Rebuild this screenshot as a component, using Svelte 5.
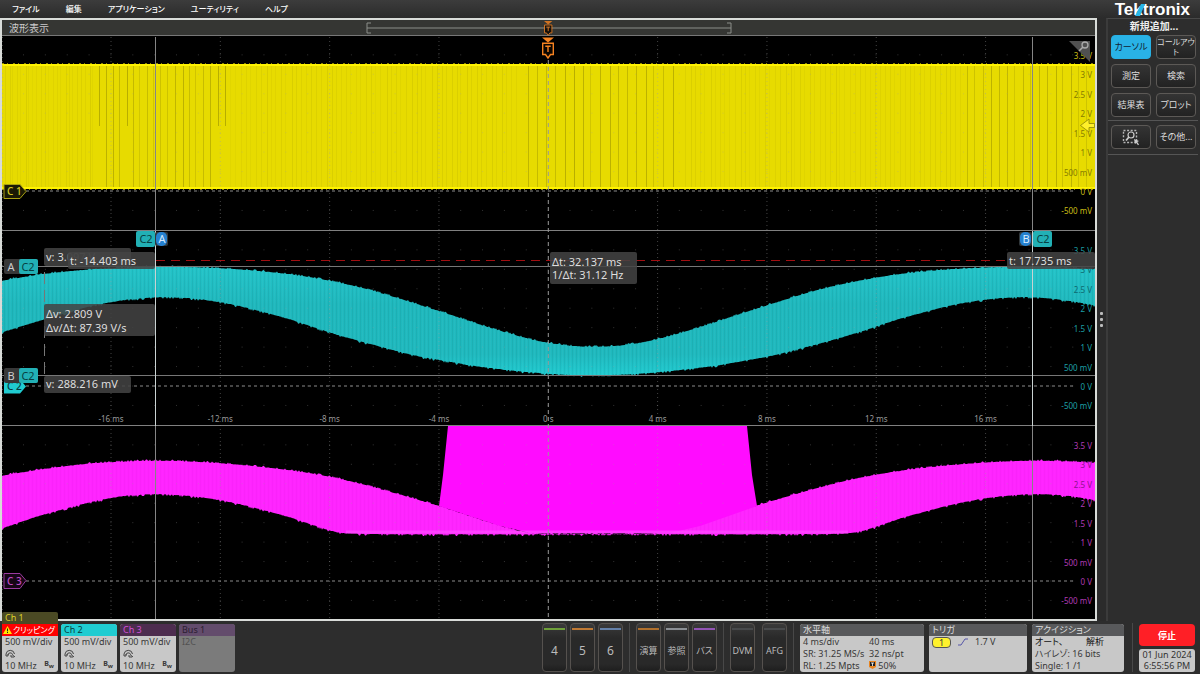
<script lang="ts">
	type Point = [number, number];

	const menus = ['ファイル', '編集', 'アプリケーション', 'ユーティリティ', 'ヘルプ'];
	const volts = ['3.5 V', '3 V', '2.5 V', '2 V', '1.5 V', '1 V', '500 mV', '0 V', '-500 mV'];
	const times = [-16, -12, -8, -4, 0, 4, 8, 12, 16];

	// plot coordinates: each slice holds 10 vertical steps of 500 mV
	const left = 2;
	const right = 1095;
	const zeroX = 548.3;
	const msWidth = 27.33;
	const step = 19.45;
	const slices = [
		{ id: 1, top: 37, zero: 191, color: '#c9bd14', over: '#857c00', covered: [1, 2, 3, 4, 5, 6] },
		{ id: 2, top: 231, zero: 386, color: '#1c9fa5', over: '#0d6a70', covered: [1, 2] },
		{ id: 3, top: 426, zero: 581, color: '#b03ab4', over: '#8d128f', covered: [1, 2] }
	];

	const cyanTop: Point[] = [[-60, 291], [2, 281], [45, 274], [100, 269], [155, 267], [220, 268.5], [286, 274], [329, 281], [373, 291], [438, 311], [500, 331], [548, 343], [594, 347]];
	const cyanBottom: Point[] = [[-60, 350], [2, 332], [45, 319], [100, 304], [160, 297], [220, 302], [286, 318], [329, 332], [373, 344.5], [416, 355.5], [438, 359.5], [480, 366.5], [548, 373.5], [594, 375]];
	const pinkTop: Point[] = [[-60, 488], [2, 476], [60, 467], [100, 463], [160, 461], [220, 463.5], [286, 470], [329, 477], [370, 486.5], [438, 506], [500, 526], [530, 533], [597, 534]];
	const pinkBottom: Point[] = [[-60, 546], [2, 528], [45, 514], [110, 498], [160, 494], [220, 500], [286, 516], [329, 530], [346, 533], [400, 534], [597, 534]];

	function noise(n: number) {
		const v = Math.sin(n * 12.9898) * 43758.5453;
		return v - Math.floor(v);
	}

	function mirror(points: Point[], axis: number): Point[] {
		const back = points.slice(0, -1).reverse();
		return [...points, ...back.map(([x, y]) => [2 * axis - x, y] as Point)];
	}

	// Catmull-Rom through the key points
	function curve(points: Point[], x: number) {
		let i = points.findIndex((p) => p[0] > x) - 1;
		if (i < 0) i = 0;
		const p0 = points[Math.max(i - 1, 0)];
		const p1 = points[i];
		const p2 = points[i + 1];
		const p3 = points[Math.min(i + 2, points.length - 1)];
		const h = p2[0] - p1[0];
		const t = (x - p1[0]) / h;
		const m1 = ((p2[1] - p0[1]) / (p2[0] - p0[0])) * h;
		const m2 = ((p3[1] - p1[1]) / (p3[0] - p1[0])) * h;
		const t2 = t * t;
		const t3 = t2 * t;
		return (2 * t3 - 3 * t2 + 1) * p1[1] + (t3 - 2 * t2 + t) * m1 + (3 * t2 - 2 * t3) * p2[1] + (t3 - t2) * m2;
	}

	function band(top: Point[], bottom: Point[], axis: number) {
		const a = mirror(top, axis);
		const b = mirror(bottom, axis);
		const up: string[] = [];
		const down: string[] = [];
		for (let x = left; x <= right; x += 1) {
			const n = noise(x);
			const m = noise(x + 4000);
			up.push(`${x} ${(curve(a, x) - (n > 0.8 ? 1.5 : n * 0.6)).toFixed(1)}`);
			down.unshift(`${x} ${(curve(b, x) + (m > 0.85 ? 1.8 : m * 0.6)).toFixed(1)}`);
		}
		return `M${up.join('L')}L${down.join('L')}Z`;
	}

	const cyanBand = band(cyanTop, cyanBottom, 594);
	const pinkBand = band(pinkTop, pinkBottom, 597);

	// aliasing gaps between the packed clock pulses
	const gaps: { x: number; length: number; opacity: number }[] = [];
	for (const [from, to, pitch] of [[4, 96, 4], [97, 225, 7], [230, 520, 5], [527, 680, 9], [684, 960, 5], [966, 1090, 8]]) {
		for (let x = from; x < to; x += pitch) {
			const n = noise(x + 31);
			const strong = pitch > 6;
			gaps.push({ x: Math.round(x + n * 2), length: strong && n > 0.93 ? 60 : 121, opacity: strong ? 0.12 + n * 0.16 : 0.03 + n * 0.05 });
		}
	}

	const channels = [
		{ name: 'Ch 1', kind: 'one' },
		{ name: 'Ch 2', kind: 'two' },
		{ name: 'Ch 3', kind: 'three' }
	];
	const adders = [
		[
			{ label: '4', color: '#6fa03a' },
			{ label: '5', color: '#c07a34' },
			{ label: '6', color: '#6480a8' }
		],
		[
			{ label: '演算', color: '#b0702c' },
			{ label: '参照', color: '#8b8f94' },
			{ label: 'バス', color: '#9254b4' }
		],
		[
			{ label: 'DVM', color: '#484a4c' },
			{ label: 'AFG', color: '#484a4c' }
		]
	];

	let active = 'カーソル';
	const tools = ['カーソル', 'コールアウ\nト', '測定', '検索', '結果表', 'プロット'];
</script>

{#snippet trigger()}
	<path d="M0 0H12L6 5Z" fill="#f58220" />
	<path d="M.7 5.7H11.3V17H8.5L6 20.5L3.5 17H.7Z" fill="#0a0500" stroke="#f58220" stroke-width="1.4" />
	<path d="M3.3 8.7H8.7M6 8.7V14.5" stroke="#f58220" stroke-width="1.4" fill="none" />
{/snippet}

<div class="screen">
	<header>
		<nav>
			{#each menus as menu}
				<button class="menu">{menu}</button>
			{/each}
		</nav>
		<div class="logo">
			Tektronix
			<svg class="slash" viewBox="0 0 10 12" width="10" height="12" aria-hidden="true">
				<path d="M6 0H10L5 12H0Z" fill="#27b7e8" />
			</svg>
		</div>
	</header>

	<main>
		<section class="scope">
			<div class="title">
				<span>波形表示</span>
				<svg viewBox="0 0 366 16" width="366" height="16" aria-hidden="true">
					<path d="M5 3H1V13H5M361 3H365V13H361M1 8H365" fill="none" stroke="#8c8e8a" />
					<g transform="translate(178 1) scale(.7)" opacity=".8">{@render trigger()}</g>
				</svg>
			</div>

			<svg class="plot" viewBox="2 36 1093 583" role="img" aria-label="波形表示">
				<defs>
					<pattern id="stripes" width="4" height="8" patternUnits="userSpaceOnUse">
						<rect width="1" height="8" fill="#000" opacity=".05" />
						<rect x="2" width="1" height="8" fill="#fff" opacity=".03" />
					</pattern>
					<linearGradient id="cyan" x1="0" x2="0" y1="0" y2="1">
						<stop offset="0" stop-color="#23c4c9" />
						<stop offset=".35" stop-color="#1fb8bd" />
						<stop offset=".8" stop-color="#1fb9be" />
						<stop offset="1" stop-color="#20ccd1" />
					</linearGradient>
				</defs>
				<rect x={left} y="36" width="1093" height="584" fill="#000" />

				<rect x={left} y="64" width="1093" height="125" fill="#e7db00" />
				{#each gaps as gap}
					<rect x={gap.x} y="66" width="1" height={gap.length} fill="#3a3600" opacity={gap.opacity} />
				{/each}
				<path d="M2 65H1095M2 188H1095" stroke="#fff300" stroke-width="2" />
				<path d="M2 63.5H1095M2 189.5H1095" stroke="#8f8700" stroke-dasharray="2 3 1 5" />

				<path d={cyanBand} fill="url(#cyan)" />
				<path d={cyanBand} fill="url(#stripes)" />
				<path d={pinkBand} fill="#ff24ff" />
				<path d={pinkBand} fill="url(#stripes)" opacity=".4" />
				<path d="M439 506L443 475L448 426H747L752 475L757 506L700 526L670 533H530L500 526Z" fill="#ff0cff" />
				<path d="M346 532H848" stroke="#ff50ff" stroke-width="3" opacity=".7" />

				{#each slices as slice}
					{#each volts as _, i}
						<line class="dots" x1="23" x2="1076" y1={slice.zero - (7 - i) * step} y2={slice.zero - (7 - i) * step} />
					{/each}
					<line class="zero" x1="26" x2="1076" y1={slice.zero} y2={slice.zero} />
					{#if slice.id > 1}
						<line class="edge" x1={left} x2={right} y1={slice.top - 0.5} y2={slice.top - 0.5} />
					{/if}
				{/each}
				{#each times as time}
					<line
						class={time === 0 ? 'center' : 'major'}
						x1={zeroX + time * msWidth}
						x2={zeroX + time * msWidth}
						y1={time === 0 ? 60 : 37}
						y2="619"
					/>
					<text class="axis time" x={zeroX + time * msWidth} y="422">{time === 0 ? '0 s' : `${time} ms`}</text>
				{/each}
				<path class="major" d="M2.5 37V619" />

				{#each slices as slice}
					{#each volts as volt, i}
						<text class="axis" x="1092" y={slice.zero - (7 - i) * step + 4} fill={slice.covered.includes(i) ? slice.over : slice.color}>
							{volt}
						</text>
					{/each}
				{/each}

				<path d="M2 266.5H1095M2 375.5H1095" stroke="#777" />
				<path d="M155.5 37V619M1032.5 37V619" stroke="#858585" stroke-width="1" />
				<path d="M155.5 231V426M1032.5 231V426" stroke="#c9d2d2" stroke-width="1" />
				<path d="M44.5 272V375" stroke="#777" stroke-dasharray="12 6" />
				<path d="M156 260.5H1007" stroke="#a10f12" stroke-dasharray="9 6" />

				<g class="tag">
					<path d="M4 184.5H20L26 191.5L20 198.5H4Z" fill="#1b1a05" stroke="#aaa112" />
					<text x="7" y="195" fill="#d6ca20">C 1</text>
					<path d="M4 379.5H20L26 386.5L20 393.5H4Z" fill="#20ccd1" />
					<text x="7" y="390" fill="#063c40">C 2</text>
					<path d="M4 573.5H20L26 580.5L20 588.5H4Z" fill="#160616" stroke="#9a3aa0" />
					<text x="7" y="585" fill="#c14cc8">C 3</text>
				</g>

				<g class="readout">
					<rect x="44" y="248" width="87" height="18" rx="2" />
					<text x="46" y="261">v: 3.<tspan opacity=".3">097 V</tspan></text>
					<rect x="68" y="252" width="87" height="17" rx="2" />
					<text x="70" y="265">t: -14.403 ms</text>
					<rect x="44" y="304" width="111" height="32" rx="2" />
					<text x="46" y="318">Δv: 2.809 V</text>
					<text x="46" y="332">Δv/Δt: 87.39 V/s</text>
					<rect x="44" y="376" width="87" height="17" rx="2" />
					<text x="46" y="388">v: 288.216 mV</text>
					<rect x="550" y="252" width="87" height="32" rx="2" />
					<text x="552" y="266">Δt: 32.137 ms</text>
					<text x="552" y="279">1/Δt: 31.12 Hz</text>
					<rect x="1007" y="252" width="88" height="17" rx="2" />
					<text x="1009" y="265">t: 17.735 ms</text>
				</g>

				<g class="handle">
					{#each [{ name: 'A', y: 259 }, { name: 'B', y: 368 }] as cursor}
						<rect x="4" y={cursor.y} width="34" height="15" rx="2" fill="#383838" />
						<rect x="19" y={cursor.y} width="19" height="15" rx="2" fill="#22b0b5" />
						<text x="11" y={cursor.y + 12} fill="#ccc">{cursor.name}</text>
						<text x="28" y={cursor.y + 12} fill="#083f42">C2</text>
					{/each}
					{#each [{ name: 'A', box: 136, pill: 156 }, { name: 'B', box: 1033, pill: 1020 }] as cursor}
						<rect x={cursor.pill - 1} y="232" width="13" height="14" rx="2" fill="#30373b" />
						<rect x={cursor.pill} y="232" width="11" height="14" rx="5" fill="#2581d0" />
						<rect x={cursor.box} y="231" width="19" height="16" rx="2" fill="#22b0b5" />
						<text x={cursor.box + 10} y="243" fill="#083f42">C2</text>
						<text x={cursor.pill + 6} y="243" fill="#d8ecff">{cursor.name}</text>
					{/each}
				</g>

				<g transform="translate(542 37.5)">{@render trigger()}</g>
				<path d="M1069 41H1090V62Z" fill="#505050" />
				<circle cx="1085" cy="45" r="3" fill="none" stroke="#aaa" stroke-width="1.3" />
				<path d="M1083 47L1079 51" stroke="#aaa" stroke-width="1.6" />
				<path d="M1080.5 125.5L1089 119V123.5H1094.5V127.5H1089V132Z" fill="#fff02a" stroke="#8c8408" stroke-width=".8" />
			</svg>
		</section>

		<button class="splitter" aria-label="サイズ変更"><i></i><i></i><i></i></button>

		<aside>
			<h2>新規追加...</h2>
			<div class="tools">
				{#each tools as tool}
					<button class:active={active === tool} class:long={tool.length > 5} on:click={() => (active = tool)}>{tool}</button>
				{/each}
			</div>
			<div class="tools more">
				<button aria-label="ズーム">
					<svg viewBox="0 0 18 18" width="18" height="18" aria-hidden="true">
						<rect x="1.5" y="2.5" width="13" height="12" fill="none" stroke="#b5b5b5" stroke-width="1.4" stroke-dasharray="2 1.6" />
						<circle cx="9" cy="7" r="3" fill="#2b2b2b" stroke="#ccc" stroke-width="1.2" />
						<path d="M7 9L4 12.5" stroke="#ccc" stroke-width="1.8" />
						<path d="M12 11L17 13L15.3 14L17 16.5L16 17.3L14.2 14.8L13 16Z" fill="#ccc" />
					</svg>
				</button>
				<button>その他...</button>
			</div>
		</aside>
	</main>

	<footer>
		<div class="channels">
			{#each channels as channel}
				<button class="badge {channel.kind}">
					{#if channel.kind === 'one'}
						<span class="tab">{channel.name}</span>
						<span class="head">
							<svg viewBox="0 0 9 8" width="9" height="8" aria-hidden="true">
								<path d="M4.5 0L9 8H0Z" fill="#ffe600" />
								<path d="M4.5 2.5V5.3M4.5 6V7" stroke="#222" />
							</svg>クリッピング
						</span>
					{:else}
						<span class="head">{channel.name}</span>
					{/if}
					<span class="line">500 mV/div</span>
					<svg class="probe" viewBox="0 0 11 10" width="11" height="10" aria-hidden="true">
						<path d="M1 6A4.3 4.3 0 0 1 9.5 6M3 7A2.3 2.3 0 0 1 7.5 6.5M1 6V8H3V6M7 6.5L10 9M6 7V9H9" fill="none" stroke="#444" />
					</svg>
					<span class="line split">10 MHz <b>B<sub>w</sub></b></span>
				</button>
			{/each}
			<button class="badge bus">
				<span class="head">Bus 1</span>
				<span class="line">I2C</span>
			</button>
		</div>

		{#each adders as group}
			<div class="adders">
				{#each group as adder}
					<button style="--stripe: {adder.color}">{adder.label}</button>
				{/each}
			</div>
		{/each}

		<div class="settings">
			<button class="badge horizontal">
				<span class="head">水平軸</span>
				<span class="pairs">
					<span>4 ms/div</span><span>40 ms</span>
					<span>SR: 31.25 MS/s</span><span>32 ns/pt</span>
					<span>RL: 1.25 Mpts</span>
					<span>
						<svg viewBox="0 0 7 8" width="7" height="8" aria-hidden="true">
							<path d="M0 0H7V6L3.5 8L0 6Z" fill="#e88420" />
							<path d="M1 1H6V5H1Z" fill="#222" />
							<path d="M2 2H5M3.5 2V5" stroke="#fff" stroke-width=".8" />
						</svg>
						50%
					</span>
				</span>
			</button>
			<button class="badge trig">
				<span class="head">トリガ</span>
				<span class="source">
					<span class="pill">1</span>
					<svg viewBox="0 0 10 8" width="10" height="8" aria-hidden="true">
						<path d="M0 7H3L7 1H10" fill="none" stroke="#5656a8" />
					</svg>
					1.7 V
				</span>
			</button>
			<button class="badge acq">
				<span class="head">アクイジション</span>
				<span class="line auto"><span>オート、</span><span>解析</span></span>
				<span class="line">ハイレゾ: 16 bits</span>
				<span class="line">Single: 1 /1</span>
			</button>
		</div>

		<div class="status">
			<button class="stop">停止</button>
			<time datetime="2024-06-01T18:55:56">01 Jun 2024<br />6:55:56 PM</time>
		</div>
	</footer>
</div>

<style>
	:global(body) {
		background: #2d2d2d;
	}

	.screen {
		display: flex;
		flex-direction: column;
		min-height: 100vh;
		background: #2d2d2d;
		color: #d8d8d8;
		font-family: 'Noto Sans', 'Noto Sans CJK JP', sans-serif;
		font-size: 9px;
		font-feature-settings: 'palt';
	}

	button {
		margin: 0;
		padding: 0;
		border: 0;
		background: none;
		color: inherit;
		font: inherit;
		font-feature-settings: inherit;
	}

	header {
		display: flex;
		justify-content: space-between;
		height: 18px;
		padding: 0 10px 0 12px;
		background: linear-gradient(#3c3c3c, #2b2b2b);
	}

	nav {
		display: flex;
		gap: 26px;
	}

	.menu {
		color: #fff;
		font-size: 8px;
		font-weight: 500;
		line-height: 18px;
	}

	.logo {
		position: relative;
		color: #fff;
		font: bold 17px/20px 'Liberation Sans', sans-serif;
	}

	.slash {
		position: absolute;
		left: 20px;
		top: 4px;
	}

	main {
		display: flex;
	}

	.scope {
		flex: 1;
		min-width: 0;
		border: 2px solid #d9dcd9;
		background: #000;
	}

	.title {
		display: grid;
		grid-template-columns: 1fr auto 1fr;
		height: 16px;
		box-sizing: border-box;
		border-bottom: 1px solid #777;
		background: #353633;
	}

	.title span {
		padding-left: 7px;
		color: #ccc;
		font-size: 10px;
		line-height: 16px;
	}

	.plot {
		display: block;
		width: 100%;
		height: auto;
	}

	.dots {
		stroke: #a0a0a0;
		stroke-opacity: 0.32;
		stroke-dasharray: 1 20.86;
	}

	.major {
		stroke: #a0a0a0;
		stroke-opacity: 0.42;
		stroke-dasharray: 1 3;
	}

	.zero {
		stroke: #8a8a8a;
		stroke-dasharray: 3 3;
	}

	.center {
		stroke: #999;
		stroke-dasharray: 4 3;
	}

	.edge {
		stroke: #808080;
	}

	.axis {
		font-size: 8px;
		text-anchor: end;
	}

	.time {
		fill: #999;
		text-anchor: middle;
	}

	.tag text {
		font-size: 10px;
		font-weight: 500;
	}

	.readout rect {
		fill: #444;
		fill-opacity: 0.86;
	}

	.readout text {
		fill: #dedede;
		font-size: 11px;
	}

	.handle text {
		font-size: 11px;
		text-anchor: middle;
	}

	.splitter {
		display: flex;
		flex-direction: column;
		align-items: center;
		justify-content: center;
		gap: 3px;
		width: 9px;
		background: #2b2b2b;
	}

	.splitter i {
		width: 3px;
		height: 3px;
		border-radius: 1px;
		background: #bbb;
	}

	aside {
		width: 92px;
		border-top: 1px solid #484848;
		border-left: 2px solid #3b3b3b;
		box-sizing: content-box;
	}

	h2 {
		margin: 0;
		padding-bottom: 2px;
		color: #eee;
		font-size: 10px;
		line-height: 14px;
		text-align: center;
	}

	.tools {
		display: grid;
		grid-template-columns: 1fr 1fr;
		gap: 5px;
		margin: 0 2px 0 0;
		padding: 0 2px 3px 3px;
		border-bottom: 1px solid #555;
	}

	.more {
		padding-top: 4px;
		padding-bottom: 5px;
	}

	.tools button {
		display: flex;
		align-items: center;
		justify-content: center;
		height: 24px;
		border: 1px solid #5c5956;
		border-radius: 4px;
		background: linear-gradient(#343434, #222);
		color: #ddd;
		font-size: 9px;
		line-height: 10px;
		white-space: pre;
	}

	.tools button.active {
		border-color: #27b0e4;
		background: #29b2e6;
		color: #123;
	}

	.tools button.long {
		font-size: 8px;
	}

	footer {
		display: flex;
		height: 49px;
		padding: 2px 5px 2px 2px;
		background: #2d2d2d;
	}

	.channels {
		display: flex;
		gap: 3px;
		margin-right: auto;
	}

	.badge {
		position: relative;
		display: flex;
		flex-direction: column;
		height: 48px;
		margin-top: 1px;
		border-radius: 3px;
		background: #c8c8c8;
		color: #383838;
		line-height: 12px;
		text-align: left;
		white-space: nowrap;
	}

	.channels .badge {
		width: 56px;
	}

	.head {
		height: 12px;
		padding-left: 3px;
		border-radius: 3px 3px 0 0;
		background: #58595b;
		color: #ddd;
	}

	.line {
		padding-left: 3px;
	}

	.one .head {
		display: flex;
		align-items: center;
		gap: 1px;
		padding-left: 1px;
		border-radius: 0;
		background: #f00;
		color: #fff;
		font-size: 8px;
	}

	.tab {
		position: absolute;
		bottom: 100%;
		left: 0;
		width: 53px;
		padding-left: 3px;
		border-radius: 2px 2px 0 0;
		background: #4b4a24;
		color: #ddd028;
	}

	.two .head {
		background: #20ccd1;
		color: #063c40;
	}

	.three .head {
		background: #4d2d4f;
		color: #d050d8;
	}

	.bus {
		background: #7b7b7b;
		color: #505050;
	}

	.bus .head {
		background: #634c6c;
		color: #2b1d30;
	}

	.probe {
		margin-left: 3px;
	}

	.split {
		display: flex;
		justify-content: space-between;
		padding-top: 2px;
		padding-right: 4px;
	}

	.split b {
		font-size: 7px;
		line-height: 8px;
	}

	.split sub {
		font-size: 6px;
		line-height: 6px;
	}

	.adders {
		display: flex;
		gap: 3px;
		padding-right: 6px;
		margin-right: 6px;
		border-right: 1px solid #484848;
	}

	.adders:nth-of-type(4) {
		gap: 7px;
	}

	.adders button {
		position: relative;
		width: 25px;
		padding-top: 5px;
		border: 1px solid #55514e;
		border-radius: 4px;
		background: linear-gradient(#3a3a3a, #292929 30%, #292929 85%, #1e1e1e);
		color: #bbb;
		font-size: 9px;
		white-space: nowrap;
	}

	.adders:nth-of-type(2) button {
		font-size: 12px;
	}

	.adders button::before {
		position: absolute;
		top: 4px;
		left: 1px;
		right: 1px;
		height: 2px;
		background: var(--stripe);
		content: '';
	}

	.settings {
		display: flex;
		gap: 5px;
		padding-right: 8px;
		margin-right: 6px;
		border-right: 1px solid #484848;
	}

	.horizontal {
		width: 124px;
	}

	.trig {
		width: 98px;
	}

	.acq {
		width: 92px;
	}

	.pairs {
		display: grid;
		grid-template-columns: 66px 1fr;
		padding-left: 3px;
	}

	.source {
		display: flex;
		align-items: center;
		gap: 7px;
		padding: 0 3px;
	}

	.pill {
		width: 17px;
		border: 1px solid #555;
		border-radius: 4px;
		background: #fff22d;
		line-height: 9px;
		text-align: center;
	}

	.auto {
		display: grid;
		grid-template-columns: 51px 1fr;
		color: #111;
	}

	.status {
		display: flex;
		flex-direction: column;
		gap: 3px;
		width: 56px;
		padding-top: 1px;
	}

	.stop {
		height: 22px;
		border-radius: 4px;
		background: #ff1f26;
		color: #fff;
		font-weight: bold;
	}

	time {
		height: 23px;
		border-radius: 3px;
		background: #c8c8c8;
		color: #333;
		line-height: 11px;
		text-align: center;
		white-space: nowrap;
	}
</style>
